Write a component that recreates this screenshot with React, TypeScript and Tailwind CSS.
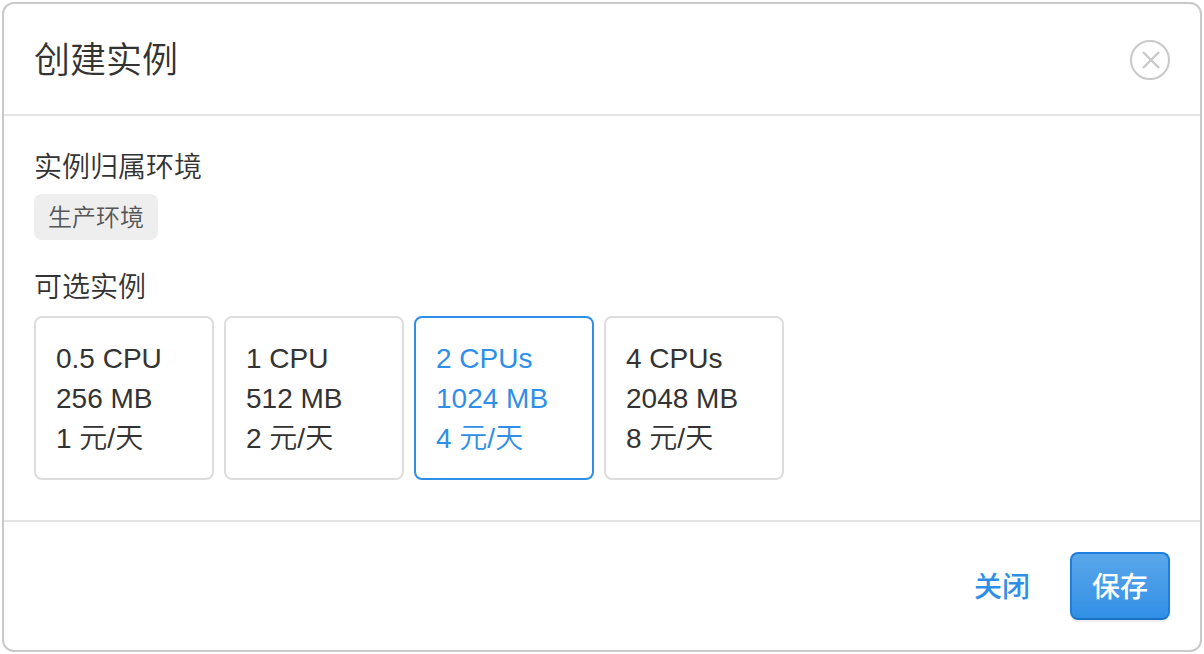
import { useState } from "react";

interface Plan {
  id: string;
  cpu: string;
  memory: string;
  price: string;
}

const plans: Plan[] = [
  { id: "small", cpu: "0.5 CPU", memory: "256 MB", price: "1 元/天" },
  { id: "medium", cpu: "1 CPU", memory: "512 MB", price: "2 元/天" },
  { id: "large", cpu: "2 CPUs", memory: "1024 MB", price: "4 元/天" },
  { id: "xlarge", cpu: "4 CPUs", memory: "2048 MB", price: "8 元/天" },
];

function CloseIcon() {
  return (
    <svg viewBox="0 0 40 40" className="size-10" fill="none" stroke="currentColor" aria-hidden="true">
      <circle cx="20" cy="20" r="19" strokeWidth="2" />
      <path d="M13 12L29 28M29 12L13 28" strokeWidth="2.4" />
    </svg>
  );
}

interface PlanCardProps {
  plan: Plan;
  checked: boolean;
  onSelect: (id: string) => void;
}

function PlanCard({ plan, checked, onSelect }: PlanCardProps) {
  return (
    <label className="relative flex w-[180px] cursor-pointer flex-col rounded-lg border-2 border-[#ddd] px-5 pt-[21px] pb-[19px] leading-10 has-checked:border-[#2f8fe6] has-checked:text-[#2f8fe6]">
      <input
        type="radio"
        name="plan"
        value={plan.id}
        checked={checked}
        onChange={() => onSelect(plan.id)}
        className="sr-only"
      />
      <span>{plan.cpu}</span>
      <span>{plan.memory}</span>
      <span>{plan.price}</span>
    </label>
  );
}

export default function App() {
  const [selected, setSelected] = useState("large");

  return (
    <main className="bg-white p-0.5 font-['Liberation_Sans','Noto_Sans_CJK_SC',sans-serif] text-[28px] font-[350] text-[#333]">
      <section
        role="dialog"
        aria-labelledby="dialog-title"
        className="rounded-xl border-2 border-[#c9c9c9]"
      >
        <header className="flex items-center justify-between border-b-2 border-[#e4e4e4] px-[30px] pt-[30px] pb-7">
          <h1 id="dialog-title" className="pt-0.5 text-4xl leading-[50px] font-[350]">
            创建实例
          </h1>
          <button type="button" aria-label="关闭" className="cursor-pointer text-[#c9c9c9]">
            <CloseIcon />
          </button>
        </header>

        <form id="plan-form" className="px-[30px] pt-8 pb-10" onSubmit={(e) => e.preventDefault()}>
          <h2 className="leading-10 font-[350]">实例归属环境</h2>
          <div className="mt-1.5 flex">
            <span className="rounded-lg bg-[#eee] px-3.5 pt-0.5 text-2xl leading-11 text-[#555]">
              生产环境
            </span>
          </div>
          <fieldset className="mt-7">
            <legend className="leading-10">可选实例</legend>
            <div className="mt-2 flex flex-wrap gap-2.5">
              {plans.map((plan) => (
                <PlanCard
                  key={plan.id}
                  plan={plan}
                  checked={plan.id === selected}
                  onSelect={setSelected}
                />
              ))}
            </div>
          </fieldset>
        </form>

        <footer className="flex items-center justify-end gap-10 border-t-2 border-[#e4e4e4] p-[30px] font-medium">
          <button type="button" className="cursor-pointer pt-3.5 pb-2.5 leading-10 text-[#2f8fe6]">
            关闭
          </button>
          <button
            type="submit"
            form="plan-form"
            className="cursor-pointer rounded-lg border-2 border-[#1c7fdb] border-b-[#1a72c7] bg-linear-to-b from-[#5ba7ea] to-[#2f8fe6] bg-origin-border px-5 pt-3.5 pb-2.5 leading-10 text-white shadow-[0_2px_2px_rgba(0,0,0,0.08)]"
          >
            保存
          </button>
        </footer>
      </section>
    </main>
  );
}
